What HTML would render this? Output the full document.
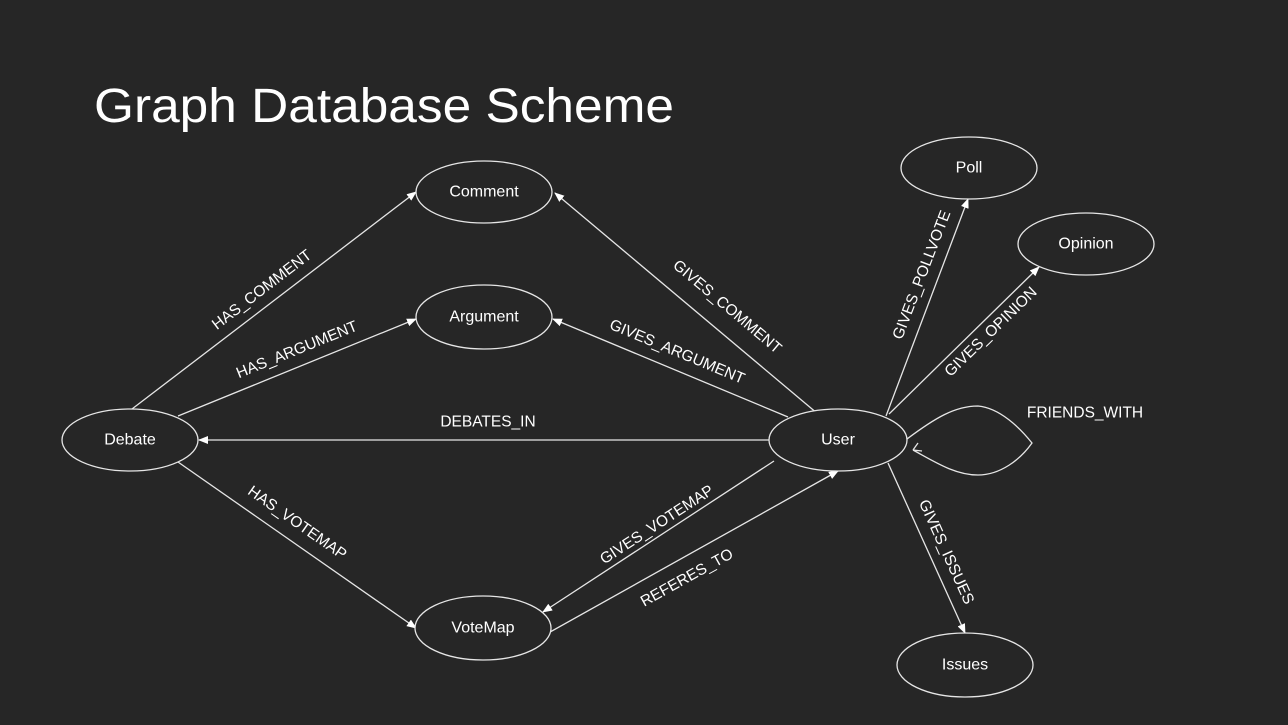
<!DOCTYPE html>
<html><head><style>
html,body{margin:0;padding:0;background:#262626;}
svg{display:block}
text{font-family:"Liberation Sans",sans-serif;fill:#fff;}
</style></head><body>
<svg width="1288" height="725" viewBox="0 0 1288 725" xmlns="http://www.w3.org/2000/svg">
<defs>
<marker id="a" markerWidth="10" markerHeight="8" refX="9" refY="4" orient="auto" markerUnits="userSpaceOnUse">
<path d="M0,0 L10,4 L0,8 Z" fill="#fff"/>
</marker>
</defs>
<rect width="1288" height="725" fill="#262626"/>
<text x="94" y="122" font-size="48" textLength="580" lengthAdjust="spacingAndGlyphs">Graph Database Scheme</text>
<g stroke="#e6e6e6" stroke-width="1.3" fill="none">
<line x1="132" y1="409" x2="416" y2="192" marker-end="url(#a)"/>
<line x1="178" y1="416" x2="416" y2="319" marker-end="url(#a)"/>
<line x1="770" y1="440" x2="199" y2="440" marker-end="url(#a)"/>
<line x1="178" y1="462" x2="416" y2="628" marker-end="url(#a)"/>
<line x1="818" y1="414" x2="555" y2="193" marker-end="url(#a)"/>
<line x1="788" y1="417" x2="553" y2="319" marker-end="url(#a)"/>
<line x1="774" y1="461" x2="543" y2="612" marker-end="url(#a)"/>
<line x1="543" y1="636" x2="838" y2="471" marker-end="url(#a)"/>
<line x1="886" y1="416" x2="968" y2="199" marker-end="url(#a)"/>
<line x1="889" y1="414" x2="1039" y2="267" marker-end="url(#a)"/>
<line x1="888" y1="463" x2="965" y2="633" marker-end="url(#a)"/>
<path d="M907,439 C935,418 955,406 978,406 C1000,408 1020,428 1032,443 C1020,460 1000,475 978,475 C955,475 935,462 913,450"/>
<path d="M913,450 L918,443 M913,450 L922,451"/>
</g>
<g stroke="#e6e6e6" stroke-width="1.3" fill="#262626">
<ellipse cx="484" cy="192" rx="68" ry="31"/>
<ellipse cx="484" cy="317" rx="68" ry="32"/>
<ellipse cx="130" cy="440" rx="68" ry="31"/>
<ellipse cx="838" cy="440" rx="69" ry="31"/>
<ellipse cx="483" cy="628" rx="68" ry="32"/>
<ellipse cx="969" cy="168" rx="68" ry="31"/>
<ellipse cx="1086" cy="244" rx="68" ry="31"/>
<ellipse cx="965" cy="665" rx="68" ry="32"/>
</g>
<g font-size="16" text-anchor="middle" dominant-baseline="central">
<text x="484" y="192">Comment</text>
<text x="484" y="317">Argument</text>
<text x="130" y="440">Debate</text>
<text x="838" y="440">User</text>
<text x="483" y="628">VoteMap</text>
<text x="969" y="168">Poll</text>
<text x="1086" y="244">Opinion</text>
<text x="965" y="665">Issues</text>
</g>
<g font-size="15.5" text-anchor="middle" dominant-baseline="central">
<text transform="translate(262,290) rotate(-37.4)">HAS_COMMENT</text>
<text transform="translate(297,350) rotate(-22)">HAS_ARGUMENT</text>
<text x="488" y="422">DEBATES_IN</text>
<text transform="translate(297,523) rotate(35)">HAS_VOTEMAP</text>
<text transform="translate(727,307) rotate(40)">GIVES_COMMENT</text>
<text transform="translate(677,352) rotate(22.6)">GIVES_ARGUMENT</text>
<text transform="translate(657,525) rotate(-33)">GIVES_VOTEMAP</text>
<text transform="translate(687,578) rotate(-29)">REFERES_TO</text>
<text transform="translate(922,275) rotate(-69)">GIVES_POLLVOTE</text>
<text transform="translate(991,332) rotate(-44)">GIVES_OPINION</text>
<text transform="translate(946,552) rotate(65.6)">GIVES_ISSUES</text>
<text x="1085" y="413">FRIENDS_WITH</text>
</g>
</svg>
</body></html>
